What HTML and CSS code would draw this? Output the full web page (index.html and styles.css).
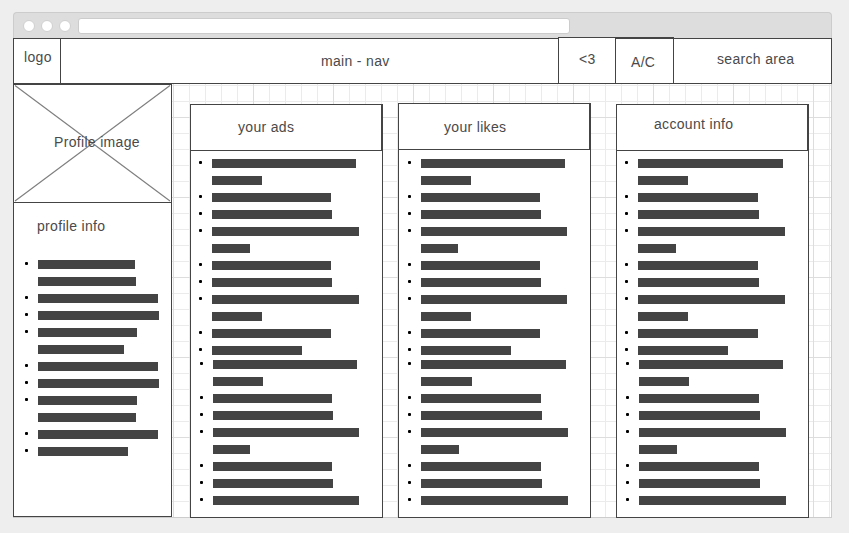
FILE: index.html
```html
<!DOCTYPE html>
<html lang="en">
<head>
<meta charset="utf-8">
<title>Profile wireframe</title>
<link rel="stylesheet" href="styles.css">
</head>
<body>
<div class="window">
  <div class="toolbar">
    <span class="dot"></span><span class="dot"></span><span class="dot"></span>
    <div class="address"></div>
  </div>
  <nav class="nav">
    <div class="cell logo">logo</div>
    <div class="cell main-nav">main - nav</div>
    <div class="cell likes">&lt;3</div>
    <div class="cell account">A/C</div>
    <div class="cell search">search area</div>
  </nav>
  <main class="content">
    <aside class="profile">
      <div class="profile-image">
        <svg class="cross" width="157" height="118" viewBox="0 0 157 118"><path d="M1 .5 156 116M156 .5 1 116"/></svg>
        <span class="caption">Profile image</span>
      </div>
      <div class="profile-title">profile info</div>
      <ul class="lines" data-widths="97 -98 120 121 99 -86 120 121 99 -98 120 90"></ul>
    </aside>
    <section class="panel ads">
      <h2 class="heading">your ads</h2>
      <ul class="lines" data-widths="144 -50 119 120 147 -38 119 120 147 -50 119 90"></ul>
      <ul class="lines more" data-widths="144 -50 119 120 146 -37 119 120 146"></ul>
    </section>
    <section class="panel liked">
      <h2 class="heading">your likes</h2>
      <ul class="lines" data-widths="144 -50 119 120 146 -37 119 120 146 -50 119 90"></ul>
      <ul class="lines more" data-widths="145 -51 120 121 147 -38 120 121 147"></ul>
    </section>
    <section class="panel info">
      <h2 class="heading">account info</h2>
      <ul class="lines" data-widths="145 -50 120 121 147 -38 120 121 147 -50 120 90"></ul>
      <ul class="lines more" data-widths="144 -50 120 121 147 -38 120 121 147"></ul>
    </section>
  </main>
</div>
<script src="lines.js"></script>
</body>
</html>
```
FILE: styles.css
```css
* { box-sizing: border-box; }
body {
  margin: 0;
  height: 533px;
  padding: 12px 17px 15px 13px;
  overflow: hidden;
  background: #eee;
  color: #4a4a4a;
  font: 14px/16px "Liberation Sans", Arial, sans-serif;
  letter-spacing: 0.32px;
}
.window { width: 819px; height: 506px; }
.toolbar {
  display: flex;
  align-items: center;
  gap: 6px;
  height: 26px;
  padding: 1px 0 0 9px;
  border: 1px solid #ccc;
  border-bottom: 0;
  border-radius: 4px 4px 0 0;
  background: #ddd;
}
.dot {
  width: 12px;
  height: 12px;
  border: 1px solid #d0d0d0;
  border-radius: 50%;
  background: #fff;
}
.dot + .dot { margin-left: -0.2px; }
.address {
  width: 492px;
  height: 16px;
  margin-left: 1.4px;
  border: 1px solid #ccc;
  border-radius: 3px;
  background: #fff;
}
.nav { display: flex; height: 46px; align-items: flex-end; }
.cell {
  height: 46px;
  border: 1px solid #444;
  border-left-width: 0;
  background: #fff;
  white-space: nowrap;
}
.logo { width: 48px; padding: 10px 0 0 10px; border-left-width: 1px; }
.main-nav { width: 497px; padding: 14px 0 0 260px; border-right: 0; }
.likes { width: 57px; height: 47px; padding: 13px 0 0 20px; border-left-width: 1px; border-right: 0; }
.account { width: 59px; height: 47px; padding: 15px 0 0 15px; border-left-width: 1px; border-top-width: 2px; }
.search { width: 158px; padding: 12px 0 0 43px; }
.content {
  display: flex;
  height: 434px;
  border: solid #ccc;
  border-width: 0 1px 1px 0;
  background-color: #fff;
  background-image:
    linear-gradient(90deg, #ddd 1px, transparent 1px),
    linear-gradient(#ddd 1px, transparent 1px),
    linear-gradient(90deg, #ebebeb 1px, transparent 1px),
    linear-gradient(#ebebeb 1px, transparent 1px);
  background-size: 80px 80px, 80px 80px, 16px 16px, 16px 16px;
  background-position: 0 33px, 0 33px, 0 1px, 0 1px;
}
.profile { width: 159px; height: 433px; border: 1px solid #444; background: #fff; }
.profile-image {
  position: relative;
  height: 118px;
  padding: 49px 0 0 40px;
  border-bottom: 1px solid #444;
}
.cross { position: absolute; left: 0; top: 0; fill: none; stroke: #808080; stroke-width: 1.2; }
.caption { position: relative; }
.profile-title { padding: 15px 0 0 23px; height: 57px; }
.profile .lines { padding-left: 24px; }
.panel { width: 193px; height: 414px; margin-top: 20px; border: 1px solid #444; background: #fff; }
.ads { margin-left: 18px; }
.liked { margin: 19px 0 0 15px; height: 415px; }
.info { margin-left: 25px; }
.heading {
  width: 191px;
  height: 46px;
  margin: 0 0 8px;
  padding: 14px 0 0 47px;
  border: solid #444;
  border-width: 0 1px 1px 0;
  font: inherit;
}
.liked .heading { padding: 15px 0 0 45px; margin-bottom: 9px; }
.info .heading { padding: 11px 0 0 37px; }
.lines {
  display: grid;
  gap: 8px;
  margin: 0;
  padding: 0 0 0 21px;
  list-style: none;
}
.liked .lines { padding-left: 22px; }
.more { margin-top: 5px; }
.ads .more { padding-left: 22px; }
.info .more { padding-left: 22px; }
.line { position: relative; height: 9px; background: #444; }
.bullet::before {
  content: "";
  position: absolute;
  left: -13px;
  top: 2px;
  width: 3px;
  height: 3px;
  border-radius: 1px;
  background: #000;
}
```
FILE: lines.js
```js
// Each number is the width of one placeholder line; a negative one continues the item above it.
document.querySelectorAll('.lines').forEach(function (list) {
  list.dataset.widths.split(' ').map(Number).forEach(function (width) {
    var line = document.createElement('li');
    line.className = width > 0 ? 'line bullet' : 'line';
    line.style.width = Math.abs(width) + 'px';
    list.appendChild(line);
  });
});
```
